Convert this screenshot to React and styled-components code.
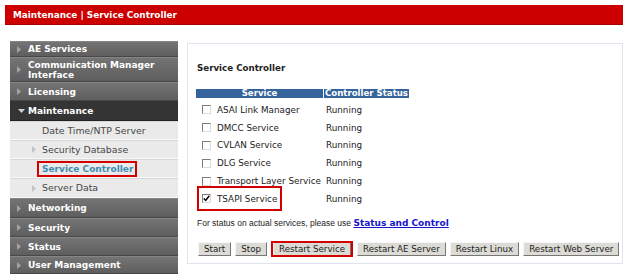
import React from "react";
import styled, { createGlobalStyle } from "styled-components";

const GlobalStyle = createGlobalStyle`
  html, body {
    margin: 0;
    padding: 0;
    background: #ffffff;
  }
  body {
    font-family: "DejaVu Sans", Verdana, sans-serif;
    width: 628px;
    height: 277px;
    overflow: hidden;
  }
`;

const navItems = [
  { label: "AE Services", kind: "top", h: 16 },
  { label: "Communication Manager Interface", kind: "top", h: 25 },
  { label: "Licensing", kind: "top" },
  { label: "Maintenance", kind: "open", h: 20 },
  { label: "Date Time/NTP Server", kind: "sub" },
  { label: "Security Database", kind: "sub", arrow: true },
  { label: "Service Controller", kind: "sub", active: true },
  { label: "Server Data", kind: "sub", arrow: true, h: 20 },
  { label: "Networking", kind: "top", h: 20 },
  { label: "Security", kind: "top" },
  { label: "Status", kind: "top" },
  { label: "User Management", kind: "top", h: 18 },
];

const services = [
  { name: "ASAI Link Manager", checked: false },
  { name: "DMCC Service", checked: false },
  { name: "CVLAN Service", checked: false },
  { name: "DLG Service", checked: false },
  { name: "Transport Layer Service", checked: false },
  { name: "TSAPI Service", checked: true, marked: true },
];

const buttons = [
  { label: "Start" },
  { label: "Stop" },
  { label: "Restart Service", marked: true },
  { label: "Restart AE Server" },
  { label: "Restart Linux" },
  { label: "Restart Web Server" },
];

const RightTri = ({ color }) => (
  <svg width="4" height="7" viewBox="0 0 4 7">
    <polygon points="0,0 4,3.5 0,7" fill={color} />
  </svg>
);

const DownTri = ({ color }) => (
  <svg width="7" height="4" viewBox="0 0 7 4">
    <polygon points="0,0 7,0 3.5,4" fill={color} />
  </svg>
);

const App = () => {
  return (
    <Page>
      <GlobalStyle />
      <TitleBar>Maintenance | Service Controller</TitleBar>
      <Body>
        <Nav>
          {navItems.map((item) => (
            <NavItem key={item.label} kind={item.kind} h={item.h}>
              <Arrow kind={item.kind}>
                {item.kind === "top" && <RightTri color="#a3a3a3" />}
                {item.kind === "open" && <DownTri color="#d0d0d0" />}
                {item.kind === "sub" && item.arrow && (
                  <RightTri color="#c4c4c4" />
                )}
              </Arrow>
              {item.active ? (
                <ActiveLabel>{item.label}</ActiveLabel>
              ) : (
                <span>{item.label}</span>
              )}
            </NavItem>
          ))}
        </Nav>
        <Panel>
          <Heading>Service Controller</Heading>
          <ServiceTable>
            <thead>
              <tr>
                <HeadCell style={{ width: 125 }}>Service</HeadCell>
                <HeadCell>Controller Status</HeadCell>
              </tr>
            </thead>
            <tbody>
              {services.map((s) => (
                <tr key={s.name}>
                  <NameCell>
                    <ServiceName marked={s.marked}>
                      <CheckBox>
                        {s.checked && (
                          <svg width="7" height="7" viewBox="0 0 7 7">
                            <path
                              d="M0.8 3.4 L2.7 5.4 L6.3 0.8"
                              stroke="#000"
                              strokeWidth="1.5"
                              fill="none"
                            />
                          </svg>
                        )}
                      </CheckBox>
                      {s.name}
                    </ServiceName>
                  </NameCell>
                  <StatusCell>Running</StatusCell>
                </tr>
              ))}
            </tbody>
          </ServiceTable>
          <Note>
            For status on actual services, please use{" "}
            <NoteLink href="#">Status and Control</NoteLink>
          </Note>
          <ButtonRow>
            {buttons.map((b) => (
              <Button key={b.label} marked={b.marked}>
                {b.label}
              </Button>
            ))}
          </ButtonRow>
        </Panel>
      </Body>
    </Page>
  );
};

const Page = styled.div`
  width: 628px;
  height: 277px;
  padding-top: 5px;
  box-sizing: border-box;
`;

const TitleBar = styled.div`
  margin: 0 5px;
  height: 20px;
  background: #cc0000;
  border-bottom: 1px solid #a40000;
  color: #ffffff;
  font-weight: bold;
  font-size: 8.9px;
  line-height: 20px;
  padding-left: 8px;
  box-sizing: border-box;
`;

const Body = styled.div`
  display: flex;
  align-items: flex-start;
  margin-top: 16px;
  padding-left: 10px;
  gap: 9px;
`;

const Nav = styled.div`
  width: 168px;
  display: flex;
  flex-direction: column;
`;

const NavItem = styled.div`
  display: flex;
  align-items: center;
  box-sizing: border-box;
  height: ${(p) => p.h || 19}px;
  line-height: 10px;
  ${(p) =>
    p.kind === "top" &&
    `
    background: linear-gradient(#747474, #5e5e5e);
    border-top: 1px solid #858585;
    border-bottom: 1px solid #484848;
    color: #ffffff;
    font-weight: bold;
    font-size: 9px;
    padding-left: 7px;
  `}
  ${(p) =>
    p.kind === "open" &&
    `
    background: #343434;
    border-bottom: 1px solid #222222;
    color: #ffffff;
    font-weight: bold;
    font-size: 9px;
    padding-left: 8px;
  `}
  ${(p) =>
    p.kind === "sub" &&
    `
    background: #eaeaea;
    border-bottom: 1px solid #f8f8f8;
    border-top: 1px solid #d8d8d8;
    color: #474747;
    font-size: 9.4px;
    padding-left: 22px;
  `}
`;

const Arrow = styled.span`
  flex: none;
  display: inline-flex;
  align-items: center;
  width: ${(p) => (p.kind === "open" ? 10 : p.kind === "sub" ? 10 : 11)}px;
`;

const ActiveLabel = styled.span`
  position: relative;
  color: #3d8db3;
  font-weight: bold;
  font-size: 9px;

  &::after {
    content: "";
    position: absolute;
    left: -5px;
    right: -4px;
    top: -3px;
    bottom: -3px;
    border: 2px solid #d40000;
  }
`;

const Panel = styled.div`
  width: 436px;
  height: 221px;
  margin-top: 2px;
  box-sizing: border-box;
  border: 1px solid #dfe5ee;
  background: #ffffff;
  padding: 18px 9px 0 9px;
  display: flex;
  flex-direction: column;
  align-items: flex-start;
`;

const Heading = styled.div`
  font-weight: bold;
  font-size: 8.7px;
  line-height: 12px;
  color: #222222;
  margin-bottom: 15px;
`;

const ServiceTable = styled.table`
  border-collapse: separate;
  border-spacing: 1px 0;
  margin-left: -2px;
  font-size: 8.8px;

  tbody tr:first-child td {
    padding-top: 3px;
  }
`;

const HeadCell = styled.th`
  background: #35639b;
  color: #ffffff;
  font-weight: bold;
  font-size: 8.6px;
  height: 9px;
  line-height: 9px;
  padding: 0 1px;
  text-align: center;
`;

const NameCell = styled.td`
  padding: 0;
  height: 17.8px;
  color: #222222;
`;

const StatusCell = styled.td`
  padding: 0 0 0 2px;
  color: #222222;
`;

const ServiceName = styled.span`
  position: relative;
  display: inline-flex;
  align-items: center;
  gap: 6px;
  height: 13px;
  padding-left: 6px;
  white-space: nowrap;

  &::after {
    content: "";
    display: ${(p) => (p.marked ? "block" : "none")};
    position: absolute;
    left: 1px;
    right: -5px;
    top: -6px;
    bottom: -6px;
    border: 2px solid #d40000;
  }
`;

const CheckBox = styled.span`
  width: 7px;
  height: 7px;
  flex: none;
  display: inline-flex;
  align-items: center;
  justify-content: center;
  border-top: 1px solid #7c7c7c;
  border-left: 1px solid #7c7c7c;
  border-bottom: 1px solid #dcdcdc;
  border-right: 1px solid #dcdcdc;
  background: #ffffff;
`;

const Note = styled.div`
  font-family: "Liberation Sans", Arial, sans-serif;
  font-size: 8.5px;
  line-height: 12px;
  color: #222222;
  margin-top: 9px;
`;

const NoteLink = styled.a`
  font-family: "DejaVu Sans", Verdana, sans-serif;
  font-weight: bold;
  font-size: 9px;
  color: #1515cc;
  text-decoration: underline;
`;

const ButtonRow = styled.div`
  display: flex;
  gap: 4px;
  margin-top: 13px;
  margin-left: 1px;
`;

const Button = styled.button`
  position: relative;
  font-family: "DejaVu Sans", Verdana, sans-serif;
  font-size: 8.7px;
  color: #222222;
  background: #dcdbd5;
  border-top: 1px solid #f6f6f6;
  border-left: 1px solid #f6f6f6;
  border-right: 1px solid #767676;
  border-bottom: 1px solid #767676;
  height: 14px;
  padding: 0 5px;
  line-height: 12px;
  margin: ${(p) => (p.marked ? "0 2px" : "0")};
  white-space: nowrap;

  &::after {
    content: "";
    display: ${(p) => (p.marked ? "block" : "none")};
    position: absolute;
    left: -3px;
    right: -3px;
    top: -2px;
    bottom: -2px;
    border: 2px solid #d40000;
  }
`;

export default App;
